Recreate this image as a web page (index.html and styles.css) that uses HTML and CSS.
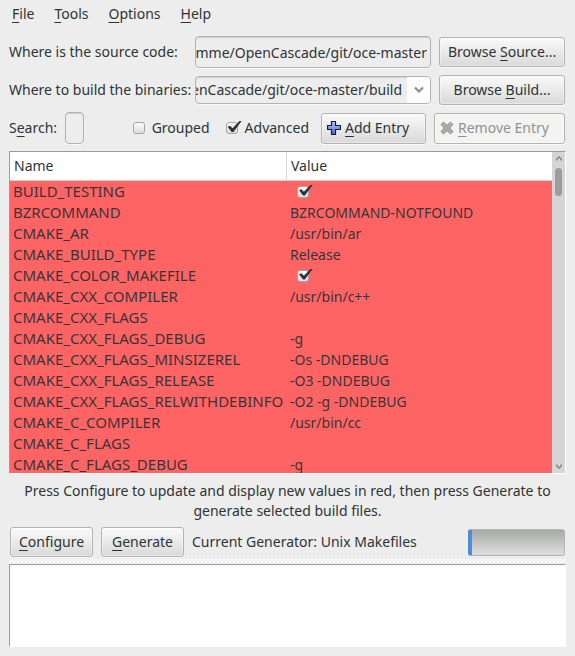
FILE: index.html
```html
<!DOCTYPE html>
<html lang="en">
<head>
<meta charset="utf-8">
<meta name="viewport" content="width=device-width, initial-scale=1">
<title>CMake</title>
<link rel="stylesheet" href="styles.css">
</head>
<body>
<nav class="menubar">
  <button type="button" class="menu"><u>F</u>ile</button>
  <button type="button" class="menu"><u>T</u>ools</button>
  <button type="button" class="menu"><u>O</u>ptions</button>
  <button type="button" class="menu"><u>H</u>elp</button>
</nav>
<main class="main">
  <div class="paths">
    <label for="source">Where is the source code:</label>
    <input id="source" class="field path" type="text" value="amme/OpenCascade/git/oce-master">
    <button type="button" class="button">Browse <u>S</u>ource...</button>
    <label for="build">Where to build the binaries:</label>
    <div class="combo">
      <input id="build" class="path" type="text" value="penCascade/git/oce-master/build">
      <button type="button" class="combo-arrow" aria-label="Show builds">
        <svg width="10" height="8" viewBox="0 0 10 8"><path d="M1 1.5 5 5.5 9 1.5" fill="none" stroke="#8b8e8b" stroke-width="2.2"/></svg>
      </button>
    </div>
    <button type="button" class="button">Browse <u>B</u>uild...</button>
  </div>

  <div class="tools">
    <label for="search">S<u>e</u>arch:</label>
    <input id="search" class="field search" type="text">
    <label class="check grouped"><input type="checkbox">Grouped</label>
    <label class="check"><input type="checkbox" checked>Advanced</label>
    <button type="button" class="button icon-button add">
      <svg width="14" height="14" viewBox="0 0 14 14"><defs><linearGradient id="plus" x1="0" y1="0" x2="0" y2="1"><stop offset="0" stop-color="#b4c8f5"/><stop offset="1" stop-color="#4a68c4"/></linearGradient></defs><path d="M4.5 .5h4v4h5v4h-5v5h-4v-5h-4v-4h4z" fill="url(#plus)" stroke="#101c5c" stroke-width="1.2"/></svg>
      <span><u>A</u>dd Entry</span>
    </button>
    <button type="button" class="button icon-button remove" disabled>
      <svg width="14" height="14" viewBox="0 0 14 14"><path d="M3.5 1 7 4.2 10.500 1 13 3.500 9.800 7 13 10.500 10.500 13 7 9.800 3.500 13 1 10.500 4.200 7 1 3.500z" fill="#a9aaa9" stroke="#999b99" stroke-linejoin="round"/></svg>
      <span><u>R</u>emove Entry</span>
    </button>
  </div>

  <div class="cache">
    <div class="cache-view">
      <table class="entries">
        <thead><tr><th class="name">Name</th><th>Value</th></tr></thead>
        <tbody>
          <tr><td>BUILD_TESTING</td><td><input type="checkbox" checked aria-label="BUILD_TESTING"></td></tr>
          <tr><td>BZRCOMMAND</td><td>BZRCOMMAND-NOTFOUND</td></tr>
          <tr><td>CMAKE_AR</td><td>/usr/bin/ar</td></tr>
          <tr><td>CMAKE_BUILD_TYPE</td><td>Release</td></tr>
          <tr><td>CMAKE_COLOR_MAKEFILE</td><td><input type="checkbox" checked aria-label="CMAKE_COLOR_MAKEFILE"></td></tr>
          <tr><td>CMAKE_CXX_COMPILER</td><td>/usr/bin/c++</td></tr>
          <tr><td>CMAKE_CXX_FLAGS</td><td></td></tr>
          <tr><td>CMAKE_CXX_FLAGS_DEBUG</td><td>-g</td></tr>
          <tr><td>CMAKE_CXX_FLAGS_MINSIZEREL</td><td>-Os -DNDEBUG</td></tr>
          <tr><td>CMAKE_CXX_FLAGS_RELEASE</td><td>-O3 -DNDEBUG</td></tr>
          <tr><td>CMAKE_CXX_FLAGS_RELWITHDEBINFO</td><td>-O2 -g -DNDEBUG</td></tr>
          <tr><td>CMAKE_C_COMPILER</td><td>/usr/bin/cc</td></tr>
          <tr><td>CMAKE_C_FLAGS</td><td></td></tr>
          <tr><td>CMAKE_C_FLAGS_DEBUG</td><td>-g</td></tr>
        </tbody>
      </table>
    </div>
    <div class="scrollbar">
      <svg width="6" height="5" viewBox="0 0 6 5"><path d="M.8 4.500V3L3 1 5.200 3V4.500" fill="none" stroke="#858885" stroke-width="1.600"/></svg>
      <div class="thumb"></div>
      <svg class="down" width="6" height="5" viewBox="0 0 6 5"><path d="M.8 .5V2L3 4 5.200 2V.5" fill="none" stroke="#858885" stroke-width="1.600"/></svg>
    </div>
  </div>

  <p class="hint">Press Configure to update and display new values in red, then press Generate to generate selected build files.</p>

  <div class="actions">
    <button type="button" class="button"><u>C</u>onfigure</button>
    <button type="button" class="button"><u>G</u>enerate</button>
    <span class="generator">Current Generator: Unix Makefiles</span>
    <div class="progress" role="progressbar" aria-label="Progress" aria-valuenow="0"></div>
  </div>

  <div class="splitter"></div>
  <textarea class="log" aria-label="Output" readonly></textarea>
</main>
</body>
</html>
```
FILE: styles.css
```css
* {
  box-sizing: border-box;
}

body {
  margin: 0;
  min-height: 100vh;
  display: flex;
  flex-direction: column;
  background: #ededed;
  color: #2e3436;
  font: 14px/20px "Noto Sans", "Open Sans", sans-serif;
}

button,
input,
textarea {
  margin: 0;
  font: inherit;
  color: inherit;
}

label {
  white-space: nowrap;
}

u {
  text-decoration: underline 1px;
  text-underline-offset: 3px;
  text-decoration-skip-ink: none;
}

.menubar {
  display: flex;
  gap: 20px;
  padding: 4px 12px;
}

.menu {
  padding: 0;
  border: 0;
  background: none;
}

.main {
  flex: 1;
  display: flex;
  flex-direction: column;
  padding: 8px 9px 9px;
}

.paths {
  display: grid;
  grid-template-columns: 178px 1fr 126px;
  gap: 7px 8px;
  align-items: center;
  padding-right: 1px;
}

.button {
  height: 30px;
  padding: 0 8px;
  border: 1px solid #b2b4b2;
  border-radius: 3px;
  background: linear-gradient(#fafafa, #d9d9d9);
  box-shadow: inset 0 0 0 1px rgba(255, 255, 255, 0.4), 0 1px 0 #f8f8f8;
  white-space: nowrap;
}

.button:disabled {
  background: #f3f3f2;
  color: #8f9395;
}

.field,
.combo {
  min-width: 0;
  height: 32px;
  border: 1px solid #b2b4b2;
  border-radius: 4px;
  background: #ededed;
  box-shadow: inset 0 1px 0 #cfcfcf, 0 1px 0 #f8f8f8;
}

.path {
  direction: rtl;
  padding: 0 3px 0 0;
}

.combo {
  display: flex;
  height: 28px;
  overflow: hidden;
}

.combo .path {
  flex: 1;
  min-width: 0;
  padding-right: 5px;
  border: 0;
  background: none;
}

.combo-arrow {
  display: flex;
  align-items: center;
  justify-content: center;
  width: 23px;
  padding: 0;
  border: 0;
  background: #fcfcfc;
}

.tools {
  display: flex;
  align-items: center;
  gap: 8px;
  padding: 7px 1px 7px 0;
}

.search {
  width: 19px;
}

.check {
  display: flex;
  align-items: center;
  gap: 7px;
}

.check.grouped {
  margin-left: auto;
  margin-right: 8px;
}

input[type="checkbox"] {
  appearance: none;
  display: block;
  flex: none;
  position: relative;
  width: 12px;
  height: 12px;
  border: 1px solid #a3a5a3;
  border-radius: 3px;
  background: linear-gradient(#fafafa, #dedede);
}

input[type="checkbox"]:checked::after {
  content: "";
  position: absolute;
  left: 1px;
  top: -2px;
  width: 14px;
  height: 11px;
  background: #2e3436;
  clip-path: polygon(0 53%, 17% 44%, 35% 66%, 85% 0, 100% 0, 42% 100%, 29% 100%);
}

.icon-button {
  display: flex;
  align-items: center;
  gap: 4px;
  height: 31px;
  padding: 0 5px;
}

.add {
  width: 105px;
  margin-left: 4px;
}

.remove {
  width: 131px;
}

.cache {
  flex: 1 0 323px;
  height: 323px;
  display: flex;
  border: 1px solid #fff;
  border-top-color: #9b9d9b;
  border-left-color: #9b9d9b;
}

.cache-view {
  flex: 1;
  height: 321px;
  overflow: hidden;
}

.entries {
  width: 100%;
  table-layout: fixed;
  border-collapse: separate;
  border-spacing: 0;
}

.entries th {
  height: 29px;
  padding: 0 4px;
  border-bottom: 1px solid #d3d3d3;
  background: #fff;
  font-weight: normal;
  text-align: left;
}

.entries .name {
  width: 277px;
  border-right: 1px solid #d9d9d9;
}

.entries td {
  height: 21px;
  padding: 0 3px;
  background: #ff6464;
  color: #3a3438;
  line-height: 21px;
  white-space: nowrap;
}

.entries td:first-child {
  font-size: 15px;
}

.entries td input {
  margin-left: 7px;
}

.scrollbar {
  width: 13px;
  display: flex;
  flex-direction: column;
  align-items: center;
  padding: 4px 0;
  background: #d5d5d5;
}

.thumb {
  width: 7px;
  height: 28px;
  margin-top: 7px;
  border-radius: 4px;
  background: #9a9c9e;
}

.down {
  margin-top: auto;
}

.hint {
  margin: 0;
  padding: 7px 12px 6px;
  text-align: center;
}

.actions {
  display: flex;
  align-items: center;
  gap: 7px;
  padding: 0 1px;
}

.actions .button {
  width: 83px;
  margin-right: 1px;
}

.generator {
  white-space: nowrap;
}

.progress {
  width: 97px;
  height: 27px;
  margin-left: auto;
  border: 1px solid #b2b4b2;
  border-left: 4px solid #4a90d9;
  border-radius: 3px;
  background: linear-gradient(#a6a9a6, #dedede);
}

.splitter {
  height: 4px;
  margin: 2px 0 1px;
  background: repeating-conic-gradient(#ffffff 0 25%, #ededed 0 50%) 0 0 / 4px 4px;
}

.log {
  display: block;
  width: 100%;
  height: 83px;
  border: 1px solid #fff;
  border-top-color: #9b9d9b;
  border-left-color: #9b9d9b;
  background: #fff;
  resize: none;
  outline: none;
}
```
